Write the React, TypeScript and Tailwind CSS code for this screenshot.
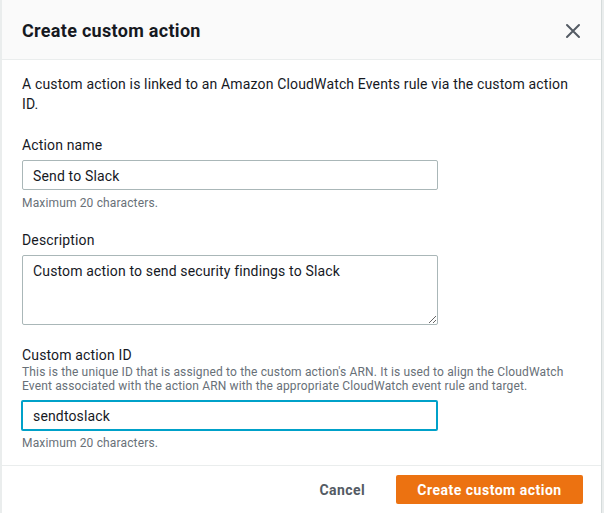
import React, { useState } from 'react';

function CloseIcon() {
  return (
    <svg width="16" height="16" viewBox="0 0 16 16" fill="none" stroke="#545b64" strokeWidth={2} strokeLinecap="round">
      <path d="M2 2l12 12M14 2L2 14" />
    </svg>
  );
}

export default function App() {
  const [name, setName] = useState('Send to Slack');
  const [desc, setDesc] = useState('Custom action to send security findings to Slack');
  const [actionId, setActionId] = useState('sendtoslack');

  return (
    <div className="h-[513px] w-[604px] overflow-hidden bg-[#eaeded] pl-[2px] pr-[2px] font-['Roboto',sans-serif] text-[14px] leading-5 tracking-[0.15px] text-[#16191f]">
      <div className="flex h-full flex-col border-r border-[#d5dbdb] bg-white">
        {/* Header */}
        <div className="flex h-[60px] shrink-0 items-center justify-between border-b border-[#eaeded] bg-[#fafafa] pl-5 pr-[16px]">
          <h2 className="pt-[2px] text-[18px] font-bold leading-6 tracking-[0.3px] text-[#16191f]">Create custom action</h2>
          <button className="flex h-6 w-6 items-center justify-center pt-[2px]">
            <CloseIcon />
          </button>
        </div>

        {/* Body */}
        <div className="flex flex-col px-5 pt-[14px] pb-[14px]">
          <p className="pr-2">
            A custom action is linked to an Amazon CloudWatch Events rule via the custom action ID.
          </p>

          <div className="mt-[21px] flex flex-col">
            <label className="leading-5">Action name</label>
            <input
              value={name}
              onChange={e => setName(e.target.value)}
              className="mt-[5px] h-[30px] w-[416px] rounded-[2px] border border-[#aab7b8] px-[10px] pt-px text-[14px] tracking-[0.15px] text-[#16191f] outline-none"
            />
            <span className="mt-[5px] text-[12px] leading-4 text-[#687078]">Maximum 20 characters.</span>
          </div>

          <div className="mt-[19px] flex flex-col">
            <label className="leading-5">Description</label>
            <textarea
              value={desc}
              onChange={e => setDesc(e.target.value)}
              className="mt-[5px] h-[70px] w-[416px] rounded-[2px] border border-[#aab7b8] px-[10px] py-[5px] text-[14px] tracking-[0.15px] text-[#16191f] outline-none"
            />
          </div>

          <div className="mt-[20px] flex flex-col">
            <label className="leading-5">Custom action ID</label>
            <span className="text-[12px] leading-[14px] text-[#687078]">
              This is the unique ID that is assigned to the custom action's ARN. It is used to align the CloudWatch Event associated with the action ARN with the appropriate CloudWatch event rule and target.
            </span>
            <input
              value={actionId}
              onChange={e => setActionId(e.target.value)}
              className="mt-[7px] -ml-px h-[31px] w-[417px] rounded-[2px] border-2 border-[#00a1c9] px-[10px] text-[14px] tracking-[0.15px] text-[#16191f] outline-none"
            />
            <span className="mt-[4px] text-[12px] leading-4 text-[#687078]">Maximum 20 characters.</span>
          </div>
        </div>

        {/* Footer */}
        <div className="flex items-center justify-end gap-[31px] border-t border-[#eaeded] pt-[9px] pr-[18px]">
          <button className="text-[14px] font-bold tracking-[0.4px] text-[#545b64]">Cancel</button>
          <button className="h-[29px] w-[187px] rounded-[2px] bg-[#ec7211] text-[14px] font-bold tracking-[0.5px] text-white">
            Create custom action
          </button>
        </div>
      </div>
    </div>
  );
}
